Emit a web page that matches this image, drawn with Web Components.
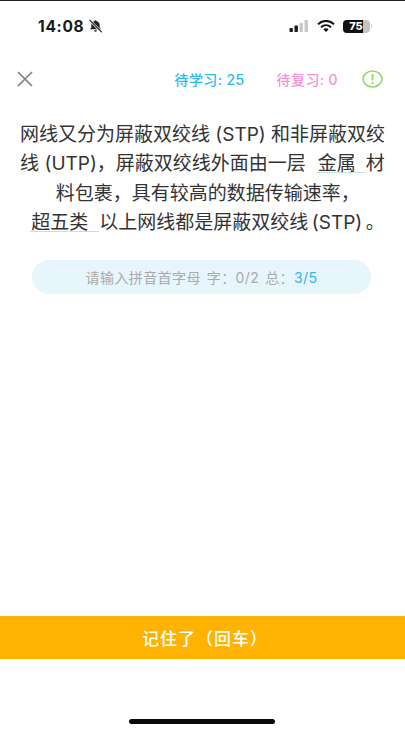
<!DOCTYPE html>
<html lang="zh">
<head>
<meta charset="utf-8">
<title>记忆</title>
<style>
    html, body { margin: 0; padding: 0; background: #fff; }
    body {
        width: 405px;
        height: 730px;
        overflow: hidden;
        font-family: "Inter", "Noto Sans CJK SC", sans-serif;
    }
</style>
</head>
<body>
<study-page>
    <status-bar slot="status" time="14:08" battery="75"></status-bar>
    <study-header slot="header" learn="25" review="0"></study-header>
    <cloze-text slot="text">网线又分为屏蔽双绞线 (STP) 和非屏蔽双绞<br>线 (UTP)，屏蔽双绞线外面由一层<cloze-blank width="49" gap="11">金属</cloze-blank>材<br>&nbsp;&nbsp;料包裹，具有较高的数据传输速率，<br><cloze-blank width="69" gap="10">超五类</cloze-blank>以上网线都是屏蔽双绞线&thinsp;(STP)&thinsp;。</cloze-text>
    <hint-pill slot="hint" word="0/2" total="3/5"></hint-pill>
    <action-button slot="action">记住了（回车）</action-button>
    <home-indicator slot="home"></home-indicator>
</study-page>

<script>
class StudyPage extends HTMLElement{
    constructor(){
        super();
        this.attachShadow({mode:'open'});
    }
    connectedCallback(){
        this.shadowRoot.innerHTML = `
            <style>
                :host{
                    display: flex;
                    flex-direction: column;
                    width: 405px;
                    height: 730px;
                    background: #fff;
                    border-top: 1px solid #222;
                    box-sizing: border-box;
                }
                .grow{ flex-grow: 1; }
            </style>
            <slot name="status"></slot>
            <slot name="header"></slot>
            <slot name="text"></slot>
            <slot name="hint"></slot>
            <div class="grow"></div>
            <slot name="action"></slot>
            <slot name="home"></slot>
        `;
    }
}
customElements.define('study-page', StudyPage);

class StatusBar extends HTMLElement{
    constructor(){
        super();
        this.attachShadow({mode:'open'});
    }
    connectedCallback(){
        const time = this.getAttribute('time');
        const battery = this.getAttribute('battery');
        this.shadowRoot.innerHTML = `
            <style>
                :host{
                    display: flex;
                    align-items: center;
                    justify-content: space-between;
                    height: 50px;
                    padding: 0 33px 0 38px;
                    box-sizing: border-box;
                    color: #1a1a1a;
                }
                .left, .right{ display: flex; align-items: center; }
                .left{ gap: 4px; }
                .right{ gap: 8px; }
                .time{
                    font: 700 15.500px "Inter", sans-serif;
                    letter-spacing: .7px;
                }
                .batt{
                    display: flex;
                    align-items: center;
                    gap: 1px;
                }
                .cell{
                    position: relative;
                    width: 27px;
                    height: 13px;
                    border-radius: 4px;
                    overflow: hidden;
                    background: #c4c4c4;
                    text-align: center;
                    font: 800 11px/13px "Inter", sans-serif;
                    color: #fff;
                }
                .fill{
                    position: absolute;
                    left: 0; top: 0; bottom: 0;
                    width: 75%;
                    background: #111;
                }
                .num{ position: relative; }
                .nub{
                    width: 1.500px;
                    height: 4px;
                    border-radius: 0 1px 1px 0;
                    background: #c4c4c4;
                }
            </style>
            <div class="left">
                <span class="time">${time}</span>
                <svg width="15" height="14" viewBox="0 0 15 14">
                    <path d="M7.5 1.2c.7 0 1.1.4 1.2 1 1.900.5 3 2 3 4v2.300l1.300 1.800H2.000l1.300-1.800V6.200c0-2 1.100-3.500 3-4 .1-.6.500-1 1.200-1z" fill="#222"/>
                    <path d="M6 11.200h3c-.1.900-.7 1.500-1.500 1.500S6.100 12.100 6 11.200z" fill="#222"/>
                    <path d="M1.500 1l12 12" stroke="#fff" stroke-width="2.400"/>
                    <path d="M1.800 1.200l11.600 11.700" stroke="#222" stroke-width="1.200" stroke-linecap="round"/>
                </svg>
            </div>
            <div class="right">
                <svg width="20" height="12" viewBox="0 0 20 12">
                    <rect x="0.500" y="8" width="3.400" height="4" rx=".8" fill="#1a1a1a"/>
                    <rect x="5.500" y="5.500" width="3.400" height="6.500" rx=".8" fill="#1a1a1a"/>
                    <rect x="10.500" y="3" width="3.400" height="9" rx=".8" fill="#c8c8c8"/>
                    <rect x="15.500" y="0" width="3.400" height="12" rx=".8" fill="#c8c8c8"/>
                </svg>
                <svg width="18" height="12" viewBox="0 0 18 12">
                    <path d="M1 4.200C5.800-.2 12.200-.2 17 4.200" fill="none" stroke="#111" stroke-width="2"/>
                    <path d="M4 7.200c3-2.700 7-2.700 10 0" fill="none" stroke="#111" stroke-width="2"/>
                    <path d="M6.300 9.300c1.600-1.400 3.800-1.400 5.400 0L9 12z" fill="#111"/>
                </svg>
                <div class="batt">
                    <div class="cell"><div class="fill"></div><span class="num">${battery}</span></div>
                    <div class="nub"></div>
                </div>
            </div>
        `;
    }
}
customElements.define('status-bar', StatusBar);

class StudyHeader extends HTMLElement{
    constructor(){
        super();
        this.attachShadow({mode:'open'});
    }
    connectedCallback(){
        this.shadowRoot.innerHTML = `
            <style>
                :host{
                    display: flex;
                    align-items: center;
                    height: 28px;
                    margin-top: 14px;
                    padding: 0 22px 0 17px;
                    font: 500 14px "Inter", "Noto Sans CJK SC", sans-serif;
                }
                .close{ display: block; margin-top: -1px; }
                .learn{ margin-left: auto; color: #2bb9ee; letter-spacing: .4px; }
                .review{ margin-left: 32px; color: #f891d4; letter-spacing: .4px; }
                .alert{ display: block; margin-left: 24px; }
            </style>
            <svg class="close" width="16" height="16" viewBox="0 0 16 16">
                <path d="M1 1l14 14M15 1L1 15" stroke="#808080" stroke-width="1.700" fill="none"/>
            </svg>
            <span class="learn">待学习: ${this.getAttribute('learn')}</span>
            <span class="review">待复习: ${this.getAttribute('review')}</span>
            <svg class="alert" width="21" height="18" viewBox="0 0 21 18">
                <ellipse cx="10.500" cy="9" rx="9.500" ry="8" fill="none" stroke="#92d964" stroke-width="1.600"/>
                <path d="M10.500 4v6.500" stroke="#92d964" stroke-width="1.800"/>
                <circle cx="10.500" cy="13" r="1.100" fill="#92d964"/>
            </svg>
        `;
    }
}
customElements.define('study-header', StudyHeader);

class ClozeText extends HTMLElement{
    constructor(){
        super();
        this.attachShadow({mode:'open'});
    }
    connectedCallback(){
        this.shadowRoot.innerHTML = `
            <style>
                :host{
                    display: block;
                    margin-top: 27px;
                    padding: 0 18px;
                    text-align: center;
                    font: 400 19px/29.300px "Inter", "Noto Sans CJK SC", sans-serif;
                    color: #333;
                }
            </style>
            <slot></slot>
        `;
    }
}
customElements.define('cloze-text', ClozeText);

class ClozeBlank extends HTMLElement{
    constructor(){
        super();
        this.attachShadow({mode:'open'});
    }
    connectedCallback(){
        this.shadowRoot.innerHTML = `
            <style>
                :host{
                    display: inline-block;
                    box-sizing: border-box;
                    width: ${this.getAttribute('width')}px;
                    height: 19px;
                    line-height: 19px;
                    vertical-align: baseline;
                    margin-left: ${this.getAttribute('gap')}px;
                    padding-left: 1px;
                    text-align: left;
                    border-bottom: 1px solid #bfe3e0;
                }
            </style>
            <slot></slot>
        `;
    }
}
customElements.define('cloze-blank', ClozeBlank);

class HintPill extends HTMLElement{
    constructor(){
        super();
        this.attachShadow({mode:'open'});
    }
    connectedCallback(){
        this.shadowRoot.innerHTML = `
            <style>
                :host{
                    display: flex;
                    align-items: center;
                    justify-content: center;
                    gap: 6px;
                    height: 34px;
                    margin: 23px 34px 0 32px;
                    border-radius: 17px;
                    background: #e7f5fd;
                    color: #aaa;
                    font: 400 14px "Inter", "Noto Sans CJK SC", sans-serif;
                    letter-spacing: .4px;
                }
                .total{ color: #2bb9ee; }
            </style>
            <span>请输入拼音首字母</span>
            <span>字：${this.getAttribute('word')}</span>
            <span>总：<span class="total">${this.getAttribute('total')}</span></span>
        `;
    }
}
customElements.define('hint-pill', HintPill);

class ActionButton extends HTMLElement{
    constructor(){
        super();
        this.attachShadow({mode:'open'});
    }
    connectedCallback(){
        this.shadowRoot.innerHTML = `
            <style>
                :host{
                    display: flex;
                    align-items: center;
                    justify-content: center;
                    height: 43px;
                    padding-left: 5px;
                    background: #ffb300;
                    color: #fff;
                    font: 500 17px "Noto Sans CJK SC", sans-serif;
                    letter-spacing: 1px;
                }
            </style>
            <slot></slot>
        `;
    }
}
customElements.define('action-button', ActionButton);

class HomeIndicator extends HTMLElement{
    constructor(){
        super();
        this.attachShadow({mode:'open'});
    }
    connectedCallback(){
        this.shadowRoot.innerHTML = `
            <style>
                :host{
                    display: flex;
                    justify-content: center;
                    height: 71px;
                    padding: 60px 1px 0 0;
                    box-sizing: border-box;
                }
                .bar{
                    width: 146px;
                    height: 5px;
                    border-radius: 3px;
                    background: #0a0a0a;
                }
            </style>
            <div class="bar"></div>
        `;
    }
}
customElements.define('home-indicator', HomeIndicator);
</script>
</body>
</html>
